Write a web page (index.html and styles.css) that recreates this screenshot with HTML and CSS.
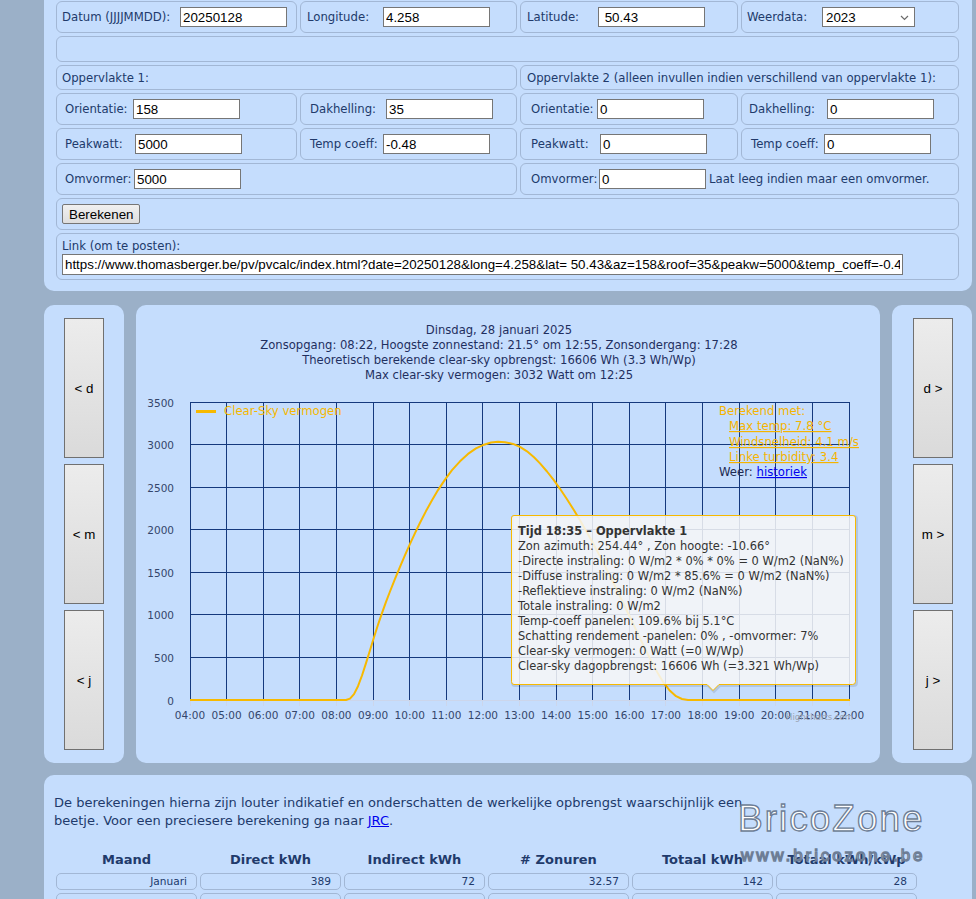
FILE: index.html
```html
<!DOCTYPE html>
<html lang="nl">
<head>
    <meta charset="UTF-8">
    <meta name="viewport" content="width=device-width, initial-scale=1.0">
    <title>PV calculator</title>
    <link rel="stylesheet" href="styles.css">
</head>
<body>
    <div class="form-panel">
        <div class="form-grid">
            <div class="cell p5"><label class="w118">Datum (JJJJMMDD):</label><input class="inp" type="text" value="20250128"></div>
            <div class="cell p6"><label class="w76">Longitude:</label><input class="inp" type="text" value="4.258"></div>
            <div class="cell p6"><label class="w71">Latitude:</label><input class="inp" type="text" value=" 50.43"></div>
            <div class="cell p5"><label class="w75">Weerdata:</label>
                <span class="select-wrap">
                    <select class="sel"><option>2023</option><option>2022</option></select>
                    <svg class="chev" width="9" height="6" viewBox="0 0 9 6"><path d="M1 1l3.5 3.5L8 1" fill="none" stroke="#6b6b6b" stroke-width="1.2"/></svg>
                </span>
            </div>

            <div class="cell span4"></div>

            <div class="cell span2 p5">Oppervlakte 1:</div>
            <div class="cell span2 p6">Oppervlakte 2 (alleen invullen indien verschillend van oppervlakte 1):</div>

            <div class="cell p8"><label class="w68">Orientatie:</label><input class="inp" type="text" value="158"></div>
            <div class="cell p9"><label class="w76">Dakhelling:</label><input class="inp" type="text" value="35"></div>
            <div class="cell p10"><label class="w66">Orientatie:</label><input class="inp" type="text" value="0"></div>
            <div class="cell p7"><label class="w78">Dakhelling:</label><input class="inp" type="text" value="0"></div>

            <div class="cell p8"><label class="w70">Peakwatt:</label><input class="inp" type="text" value="5000"></div>
            <div class="cell p9"><label class="w73">Temp coeff:</label><input class="inp" type="text" value="-0.48"></div>
            <div class="cell p10"><label class="w69">Peakwatt:</label><input class="inp" type="text" value="0"></div>
            <div class="cell p9"><label class="w73">Temp coeff:</label><input class="inp" type="text" value="0"></div>

            <div class="cell span2 p8"><label class="w69">Omvormer:</label><input class="inp" type="text" value="5000"></div>
            <div class="cell span2 p10"><label class="w68">Omvormer:</label><input class="inp" type="text" value="0"><span class="note">Laat leeg indien maar een omvormer.</span></div>

            <div class="cell span4 p5"><button class="btn">Berekenen</button></div>

            <div class="cell span4 link-cell">
                <label>Link (om te posten):</label>
                <input class="inp link-inp" type="text" value="https://www.thomasberger.be/pv/pvcalc/index.html?date=20250128&amp;long=4.258&amp;lat= 50.43&amp;az=158&amp;roof=35&amp;peakw=5000&amp;temp_coeff=-0.48&amp;inverter=5000">
            </div>
        </div>
    </div>

    <div class="chart-row">
        <div class="nav">
            <button class="nav-btn">&lt; d</button>
            <button class="nav-btn">&lt; m</button>
            <button class="nav-btn">&lt; j</button>
        </div>

        <div class="chart-panel">
            <svg class="chart" width="744" height="458" viewBox="136 305 744 458">
                <g class="titles">
                    <text x="499" y="334">Dinsdag, 28 januari 2025</text>
                    <text x="499" y="349">Zonsopgang: 08:22, Hoogste zonnestand: 21.5° om 12:55, Zonsondergang: 17:28</text>
                    <text x="499" y="364">Theoretisch berekende clear-sky opbrengst: 16606 Wh (3.3 Wh/Wp)</text>
                    <text x="499" y="379">Max clear-sky vermogen: 3032 Watt om 12:25</text>
                </g>

                <path class="grid" d="M190.5 402V700M226.5 402V700M263.5 402V700M299.5 402V700M336.5 402V700M373.5 402V700M409.5 402V700M446.5 402V700M482.5 402V700M519.5 402V700M556.5 402V700M592.5 402V700M629.5 402V700M665.5 402V700M702.5 402V700M739.5 402V700M775.5 402V700M812.5 402V700M849.5 402V700M190 402.5H850M190 444.5H850M190 487.5H850M190 529.5H850M190 572.5H850M190 614.5H850M190 657.5H850"/>
                <path class="axis" d="M190 700.5H850M190.5 700v6M226.5 700v6M263.5 700v6M299.5 700v6M336.5 700v6M373.5 700v6M409.5 700v6M446.5 700v6M482.5 700v6M519.5 700v6M556.5 700v6M592.5 700v6M629.5 700v6M665.5 700v6M702.5 700v6M739.5 700v6M775.5 700v6M812.5 700v6M849.5 700v6"/>

                <g class="ylabels">
                    <text x="174" y="406.5">3500</text>
                    <text x="174" y="448.5">3000</text>
                    <text x="174" y="491.5">2500</text>
                    <text x="174" y="533.5">2000</text>
                    <text x="174" y="576.5">1500</text>
                    <text x="174" y="618.5">1000</text>
                    <text x="174" y="661.5">500</text>
                    <text x="174" y="704.5">0</text>
                </g>

                <g class="xlabels">
                    <text x="190" y="719">04:00</text>
                    <text x="226.6" y="719">05:00</text>
                    <text x="263.2" y="719">06:00</text>
                    <text x="299.8" y="719">07:00</text>
                    <text x="336.4" y="719">08:00</text>
                    <text x="373.1" y="719">09:00</text>
                    <text x="409.7" y="719">10:00</text>
                    <text x="446.3" y="719">11:00</text>
                    <text x="482.9" y="719">12:00</text>
                    <text x="519.5" y="719">13:00</text>
                    <text x="556.1" y="719">14:00</text>
                    <text x="592.7" y="719">15:00</text>
                    <text x="629.3" y="719">16:00</text>
                    <text x="665.9" y="719">17:00</text>
                    <text x="702.6" y="719">18:00</text>
                    <text x="739.2" y="719">19:00</text>
                    <text x="775.8" y="719">20:00</text>
                    <text x="812.4" y="719">21:00</text>
                    <text x="849" y="719">22:00</text>
                </g>

                <text class="credits" x="853" y="720">Highcharts.com</text>

                <polyline class="curve" points="190,700 346,700 350,698.6 354,694.1 358,686.2 362,675.5 366,663.1 370,650.2 374,637.3 378,624.8 382,613.1 386,601.9 390,591.5 395,578.9 400,566.8 405,555.2 410,543.9 415,533.1 420,522.7 426,511.1 432,500.2 438,490.1 445,479.6 452,470.2 460,461.3 468,453.9 476,448.4 484,444.7 491,442.5 498,441.8 505,442.2 513,443.9 520,446.9 527,451.3 534,457.3 540,463.4 547,471.5 554,480.4 560,488.8 567,499.3 574,510.3 580,520.3 590,537.8 600,556.4 610,576 620,596.5 630,617.3 640,638.2 650,658.6 658,673.6 664,683.4 670,690.8 676,696.2 682,699 688,700 850,700"/>

                <g class="legend">
                    <path d="M196 411.5H216"/>
                    <text x="224" y="415">Clear-Sky vermogen</text>
                </g>

                <g class="notes">
                    <text x="719" y="415">Berekend met:</text>
                    <text class="u" x="729" y="430">Max temp: 7.8 °C</text>
                    <text class="u" x="729" y="446">Windsnelheid: 4.1 m/s</text>
                    <text class="u" x="729" y="461">Linke turbidity: 3.4</text>
                    <text class="weer" x="719" y="476">Weer: <tspan class="link">historiek</tspan></text>
                </g>

                <g class="tooltip">
                    <path class="tip-shadow" d="M515 516.5H854Q856.5 516.5 856.5 519V682.5Q856.5 685.5 853.5 685.5H720L714 691.5L708 685.5H515Q512.5 685.5 512.5 682.5V519Q512.5 516.5 515 516.5Z"/>
                    <path class="tip-box" d="M514 515.5H853Q855.5 515.5 855.5 518V681.5Q855.5 684.5 852.5 684.5H719L713 690.5L707 684.5H514Q511.5 684.5 511.5 681.5V518Q511.5 515.5 514 515.5Z"/>
                    <text class="tip-head" x="518" y="535">Tijd 18:35 – Oppervlakte 1</text>
                    <text x="518" y="550">Zon azimuth: 254.44° , Zon hoogte: -10.66°</text>
                    <text x="518" y="565">-Directe instraling: 0 W/m2 * 0% * 0% = 0 W/m2 (NaN%)</text>
                    <text x="518" y="580">-Diffuse instraling: 0 W/m2 * 85.6% = 0 W/m2 (NaN%)</text>
                    <text x="518" y="595">-Reflektieve instraling: 0 W/m2 (NaN%)</text>
                    <text x="518" y="610">Totale instraling: 0 W/m2</text>
                    <text x="518" y="625">Temp-coeff panelen: 109.6% bij 5.1°C</text>
                    <text x="518" y="640">Schatting rendement -panelen: 0% , -omvormer: 7%</text>
                    <text x="518" y="655">Clear-sky vermogen: 0 Watt (=0 W/Wp)</text>
                    <text x="518" y="670">Clear-sky dagopbrengst: 16606 Wh (=3.321 Wh/Wp)</text>
                </g>
            </svg>
        </div>

        <div class="nav nav-right">
            <button class="nav-btn">d &gt;</button>
            <button class="nav-btn">m &gt;</button>
            <button class="nav-btn">j &gt;</button>
        </div>
    </div>

    <div class="info-panel">
        <p class="intro">De berekeningen hierna zijn louter indikatief en onderschatten de werkelijke opbrengst waarschijnlijk een beetje. Voor een preciesere berekening ga naar <a href="#">JRC</a>.</p>
        <div class="month-table">
            <div class="th">Maand</div>
            <div class="th">Direct kWh</div>
            <div class="th">Indirect kWh</div>
            <div class="th"># Zonuren</div>
            <div class="th">Totaal kWh</div>
            <div class="th">Totaal kWh/kWp</div>

            <div class="td">Januari</div>
            <div class="td">389</div>
            <div class="td">72</div>
            <div class="td">32.57</div>
            <div class="td">142</div>
            <div class="td">28</div>

            <div class="td"></div>
            <div class="td"></div>
            <div class="td"></div>
            <div class="td"></div>
            <div class="td"></div>
            <div class="td"></div>
        </div>
    </div>

    <div class="watermark">
        <div class="wm-name">BricoZone</div>
        <div class="wm-url">www.bricozone.be</div>
    </div>
</body>
</html>
```

FILE: styles.css
```css
:root {
    --page-bg: #9bb0c8;
    --panel-bg: #c5ddfd;
    --cell-border: #a2b7d5;
    --navy: #213a6b;
    --orange: #f7b900;
}
* {
    box-sizing: border-box;
}
html, body {
    margin: 0;
    padding: 0;
    overflow: hidden;
}
body {
    background: var(--page-bg);
    font-family: "DejaVu Sans", Verdana, sans-serif;
    font-size: 11.7px;
    color: var(--navy);
    width: 976px;
    height: 899px;
    padding-left: 44px;
}

/* Formulier */
.form-panel {
    width: 928px;
    background: var(--panel-bg);
    border-radius: 0 0 10px 10px;
    padding: 1px 13px 11px 12px;
}
.form-grid {
    display: grid;
    grid-template-columns: 241px 217px 218px 218px;
    grid-template-rows: 32px 26px 25px 32px 32px 32px 32px 47px;
    gap: 3px;
}
.cell {
    border: 1px solid var(--cell-border);
    border-radius: 6px;
    display: flex;
    align-items: center;
    white-space: nowrap;
}
.span2 { grid-column: span 2; }
.span4 { grid-column: span 4; }
.p5 { padding-left: 5px; }
.p6 { padding-left: 6px; }
.p7 { padding-left: 7px; }
.p8 { padding-left: 8px; }
.p9 { padding-left: 9px; }
.p10 { padding-left: 10px; }
.w66 { width: 66px; }
.w68 { width: 68px; }
.w69 { width: 69px; }
.w70 { width: 70px; }
.w71 { width: 71px; }
.w73 { width: 73px; }
.w75 { width: 75px; }
.w76 { width: 76px; }
.w78 { width: 78px; }
.w118 { width: 118px; }
.cell label {
    flex: none;
}
.inp {
    width: 107px;
    height: 20px;
    border: 1px solid #767676;
    background: #fff;
    padding: 1px 2px;
    margin: 0;
    font-family: "Liberation Sans", Arial, sans-serif;
    font-size: 13.33px;
    color: #000;
}
.select-wrap {
    position: relative;
    display: inline-block;
}
.sel {
    appearance: none;
    -webkit-appearance: none;
    width: 93px;
    height: 20px;
    border: 1px solid #767676;
    border-radius: 0;
    background: #fff;
    padding: 0 0 0 3px;
    margin: 0;
    font-family: "Liberation Sans", Arial, sans-serif;
    font-size: 13.33px;
    color: #000;
    display: block;
}
.chev {
    position: absolute;
    right: 6px;
    top: 8px;
    pointer-events: none;
}
.note {
    margin-left: 3px;
}
.btn {
    height: 20px;
    padding: 0 6px;
    border: 1px solid #767676;
    border-radius: 2px;
    background: linear-gradient(#f0f0f0, #dedede);
    font-family: "Liberation Sans", Arial, sans-serif;
    font-size: 13.33px;
    color: #000;
}
.link-cell {
    flex-direction: column;
    align-items: flex-start;
    padding: 4px 0 0 5px;
}
.link-cell label {
    line-height: 16px;
}
.link-inp {
    width: 841px;
    height: 21px;
}

/* Grafiek */
.chart-row {
    display: flex;
    gap: 12px;
    margin-top: 14px;
    width: 928px;
    height: 458px;
}
.nav {
    width: 80px;
    background: var(--panel-bg);
    border-radius: 10px;
    padding: 13px 20px;
    display: flex;
    flex-direction: column;
    gap: 6px;
}
.nav-right {
    padding-left: 21px;
    padding-right: 19px;
}
.nav-btn {
    width: 40px;
    height: 140px;
    padding: 0;
    border: 1px solid #707070;
    background: linear-gradient(#ececec, #dadada);
    font-family: "Liberation Sans", Arial, sans-serif;
    font-size: 13.33px;
    color: #000;
}
.chart-panel {
    width: 744px;
    background: var(--panel-bg);
    border-radius: 10px;
    overflow: hidden;
}
.chart {
    display: block;
    font-family: "DejaVu Sans", Verdana, sans-serif;
}
.titles text {
    font-size: 11.6px;
    fill: #1f2f5f;
    text-anchor: middle;
}
.grid {
    stroke: #15397d;
    stroke-width: 1;
    fill: none;
}
.axis {
    stroke: #ccd6eb;
    stroke-width: 1;
    fill: none;
}
.ylabels text {
    font-size: 10.5px;
    fill: #34466b;
    text-anchor: end;
}
.xlabels text {
    font-size: 10.5px;
    fill: #34466b;
    text-anchor: middle;
}
.credits {
    font-size: 8.5px;
    fill: #9aa3b3;
    text-anchor: end;
}
.curve {
    fill: none;
    stroke: var(--orange);
    stroke-width: 2;
    stroke-linejoin: round;
}
.legend path {
    stroke: var(--orange);
    stroke-width: 3;
}
.legend text {
    font-size: 11.7px;
    fill: #f5b800;
}
.notes text {
    font-size: 11.7px;
    fill: #f5b400;
}
.notes .u {
    text-decoration: underline;
}
.notes .weer {
    fill: #1e2b52;
}
.notes .link {
    fill: #0000ee;
    text-decoration: underline;
}
.tip-shadow {
    fill: none;
    stroke: rgba(0, 0, 0, 0.1);
    stroke-width: 3;
}
.tip-box {
    fill: rgba(247, 247, 247, 0.86);
    stroke: var(--orange);
    stroke-width: 1;
}
.tooltip text {
    font-size: 11.45px;
    fill: #333;
}
.tooltip .tip-head {
    font-weight: bold;
}

/* Maandtabel */
.info-panel {
    width: 928px;
    margin-top: 12px;
    background: var(--panel-bg);
    border-radius: 10px;
    padding: 19px 10px 20px 10px;
}
.intro {
    margin: 0;
    width: 700px;
    font-size: 13px;
    line-height: 18px;
}
.intro a {
    color: #0000ee;
}
.month-table {
    display: grid;
    grid-template-columns: repeat(6, 141px);
    grid-template-rows: 21px 17px 17px;
    column-gap: 3px;
    row-gap: 3px;
    margin: 19px 0 0 2px;
}
.th {
    font-weight: bold;
    font-size: 13px;
    text-align: center;
    line-height: 21px;
    margin-bottom: 1px;
}
.td {
    border: 1px solid var(--cell-border);
    border-radius: 5px;
    font-size: 10.6px;
    line-height: 15px;
    text-align: right;
    padding-right: 9px;
}

/* Watermerk */
.watermark {
    position: absolute;
    left: 738px;
    top: 800px;
    font-family: "Liberation Sans", Arial, sans-serif;
    color: #fff;
    -webkit-text-stroke: 1.3px #6d7d95;
    pointer-events: none;
}
.wm-name {
    font-size: 37px;
    line-height: 37px;
    letter-spacing: 2px;
}
.wm-url {
    font-size: 17px;
    line-height: 17px;
    letter-spacing: 2.9px;
    margin-top: 10px;
    padding-left: 3px;
}
```
